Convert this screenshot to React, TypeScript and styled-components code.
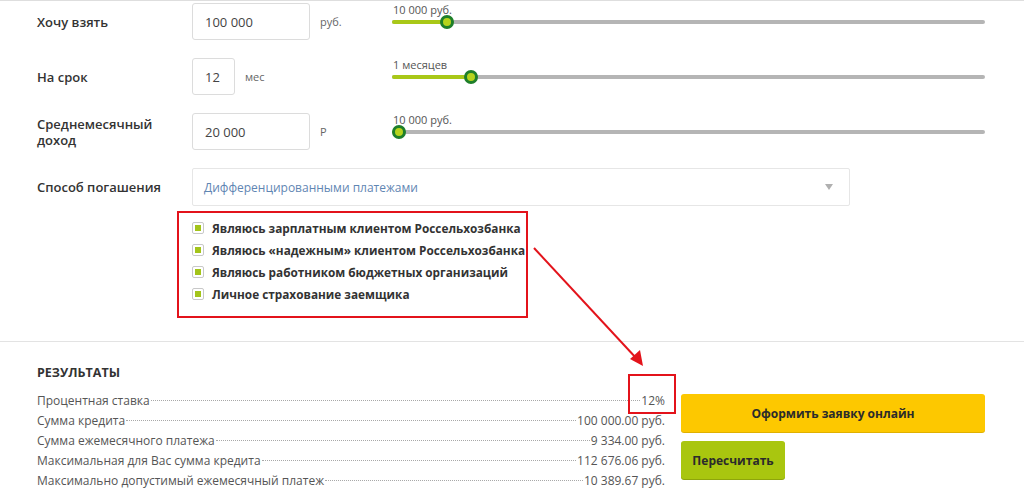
import React from "react"
import styled, { createGlobalStyle } from "styled-components"

const GlobalStyle = createGlobalStyle`
  html, body {
    margin: 0;
    padding: 0;
    background: #fff;
  }
  body {
    font-family: "Open Sans", "Liberation Sans", sans-serif;
    color: #333;
  }
`

const Page = styled.div`
  position: relative;
  width: 1024px;
  height: 493px;
  overflow: hidden;
  border-top: 1px solid #dedede;
  box-sizing: border-box;
`

const Form = styled.div`
  display: flex;
  flex-direction: column;
  gap: 18px;
  padding: 2px 0 0 37px;
`

const Row = styled.div`
  display: grid;
  grid-template-columns: 155px 200px 593px;
  align-items: center;
  height: 37px;
`

const Label = styled.div`
  font-size: 13px;
  font-weight: 600;
  line-height: 16px;
  color: #333;
`

const InputCell = styled.div`
  display: flex;
  align-items: center;
  height: 100%;
`

const Input = styled.div<{ $w: number }>`
  box-sizing: border-box;
  width: ${(p) => p.$w}px;
  height: 37px;
  border: 1px solid #dcdcdc;
  border-radius: 3px;
  display: flex;
  align-items: center;
  padding-left: 12px;
  font-size: 13px;
  color: #444;
`

const Unit = styled.span`
  margin-left: 10px;
  font-size: 11px;
  color: #666;
`

const Slider = styled.div`
  position: relative;
  height: 37px;
`

const SliderCaption = styled.div`
  position: absolute;
  left: 1px;
  top: -1px;
  font-size: 11px;
  color: #555;
`

const Track = styled.div`
  position: absolute;
  left: 0;
  right: 0;
  top: 17px;
  height: 4px;
  border-radius: 2px;
  background: #b5b5b5;
`

const Fill = styled.div`
  position: absolute;
  left: 0;
  top: 0;
  height: 4px;
  border-radius: 2px;
  background: #a9c818;
`

const Thumb = styled.div`
  position: absolute;
  top: -5px;
  width: 14px;
  height: 14px;
  margin-left: -7px;
  box-sizing: border-box;
  border-radius: 50%;
  border: 3px solid #1e7f2a;
  background: #b6d31c;
`

const SelectRow = styled.div`
  display: grid;
  grid-template-columns: 155px 658px;
  align-items: center;
  height: 38px;
`

const Select = styled.div`
  box-sizing: border-box;
  height: 38px;
  border: 1px solid #e6e6e6;
  border-radius: 2px;
  display: flex;
  align-items: center;
  justify-content: space-between;
  padding: 0 16px 0 11px;
  font-size: 12px;
  color: #5f86b3;
`

const Caret = styled.span`
  width: 0;
  height: 0;
  border-left: 4px solid transparent;
  border-right: 4px solid transparent;
  border-top: 6px solid #b0b0b0;
`

const Options = styled.div`
  margin: 5px 0 0 177px;
  width: 351px;
  height: 107px;
  box-sizing: border-box;
  border: 2px solid #e3131b;
  padding: 7px 0 0 13px;
  display: flex;
  flex-direction: column;
  gap: 6px;
`

const Option = styled.div`
  display: flex;
  align-items: center;
  gap: 8px;
  height: 16px;
  font-size: 11.8px;
  font-weight: 700;
  color: #333;
`

const Check = styled.span`
  box-sizing: border-box;
  width: 12px;
  height: 12px;
  border: 1px solid #c8c8c8;
  border-radius: 2px;
  display: flex;
  align-items: center;
  justify-content: center;
  &::after {
    content: "";
    width: 6px;
    height: 6px;
    background: #a3c41a;
  }
`

const Divider = styled.div`
  margin-top: 23px;
  border-top: 1px solid #e3e3e3;
`

const Results = styled.div`
  display: flex;
  gap: 16px;
  padding: 23px 0 0 37px;
`

const ResultsList = styled.div`
  width: 628px;
`

const ResultsTitle = styled.div`
  font-size: 12.5px;
  font-weight: 700;
  text-transform: uppercase;
  line-height: 16px;
  color: #333;
  margin-bottom: 10px;
`

const ResultRow = styled.div`
  display: flex;
  align-items: baseline;
  height: 20px;
  line-height: 20px;
  font-size: 12px;
  color: #555;
`

const Leader = styled.span`
  flex: 1;
  margin: 0 1px;
  border-bottom: 1px dotted #a8a8a8;
  transform: translateY(-4px);
`

const Value = styled.span<{ $mark?: boolean }>`
  position: relative;
  ${(p) =>
    p.$mark &&
    `
    &::after {
      content: "";
      position: absolute;
      right: -11px;
      top: -17px;
      width: 48px;
      height: 40px;
      box-sizing: border-box;
      border: 2px solid #e3131b;
    }
  `}
`

const Actions = styled.div`
  display: flex;
  flex-direction: column;
  align-items: flex-start;
  gap: 9px;
  padding-top: 29px;
`

const Button = styled.div<{ $primary?: boolean }>`
  box-sizing: border-box;
  height: 38px;
  width: ${(p) => (p.$primary ? "304px" : "104px")};
  border-radius: 3px;
  display: flex;
  align-items: center;
  justify-content: center;
  font-size: 12px;
  font-weight: 700;
  color: #2b2b2b;
  background: ${(p) => (p.$primary ? "#fdc800" : "#a9c60f")};
  box-shadow: 0 1px 0 ${(p) => (p.$primary ? "#e0b000" : "#8ea50b")};
`

const Arrow = styled.svg`
  position: absolute;
  left: 0;
  top: 0;
  pointer-events: none;
`

const sliders = [
  { caption: "10 000 руб.", pos: 55 },
  { caption: "1 месяцев", pos: 79 },
  { caption: "10 000 руб.", pos: 7 },
]

const options = [
  "Являюсь зарплатным клиентом Россельхозбанка",
  "Являюсь «надежным» клиентом Россельхозбанка",
  "Являюсь работником бюджетных организаций",
  "Личное страхование заемщика",
]

const results = [
  { label: "Процентная ставка", value: "12%", mark: true },
  { label: "Сумма кредита", value: "100 000.00 руб." },
  { label: "Сумма ежемесячного платежа", value: "9 334.00 руб." },
  { label: "Максимальная для Вас сумма кредита", value: "112 676.06 руб." },
  { label: "Максимально допустимый ежемесячный платеж", value: "10 389.67 руб." },
]

function RangeSlider({ caption, pos }: { caption: string; pos: number }) {
  return (
    <Slider>
      <SliderCaption>{caption}</SliderCaption>
      <Track>
        <Fill style={{ width: pos }} />
        <Thumb style={{ left: pos }} />
      </Track>
    </Slider>
  )
}

export default function App() {
  return (
    <Page>
      <GlobalStyle />
      <Form>
        <Row>
          <Label>Хочу взять</Label>
          <InputCell>
            <Input $w={118}>100 000</Input>
            <Unit>руб.</Unit>
          </InputCell>
          <RangeSlider {...sliders[0]} />
        </Row>
        <Row>
          <Label>На срок</Label>
          <InputCell>
            <Input $w={43}>12</Input>
            <Unit>мес</Unit>
          </InputCell>
          <RangeSlider {...sliders[1]} />
        </Row>
        <Row>
          <Label>
            Среднемесячный
            <br />
            доход
          </Label>
          <InputCell>
            <Input $w={118}>20 000</Input>
            <Unit>Р</Unit>
          </InputCell>
          <RangeSlider {...sliders[2]} />
        </Row>
        <SelectRow>
          <Label>Способ погашения</Label>
          <Select>
            Дифференцированными платежами
            <Caret />
          </Select>
        </SelectRow>
      </Form>
      <Options>
        {options.map((o) => (
          <Option key={o}>
            <Check />
            {o}
          </Option>
        ))}
      </Options>
      <Divider />
      <Results>
        <ResultsList>
          <ResultsTitle>Результаты</ResultsTitle>
          {results.map((r) => (
            <ResultRow key={r.label}>
              <span>{r.label}</span>
              <Leader />
              <Value $mark={r.mark}>{r.value}</Value>
            </ResultRow>
          ))}
        </ResultsList>
        <Actions>
          <Button $primary>Оформить заявку онлайн</Button>
          <Button>Пересчитать</Button>
        </Actions>
      </Results>
      <Arrow width="1024" height="493">
        <line x1="534" y1="247" x2="637" y2="358" stroke="#e3131b" strokeWidth="2" />
        <polygon points="643,365 630,358 640,349" fill="#e3131b" />
      </Arrow>
    </Page>
  )
}
